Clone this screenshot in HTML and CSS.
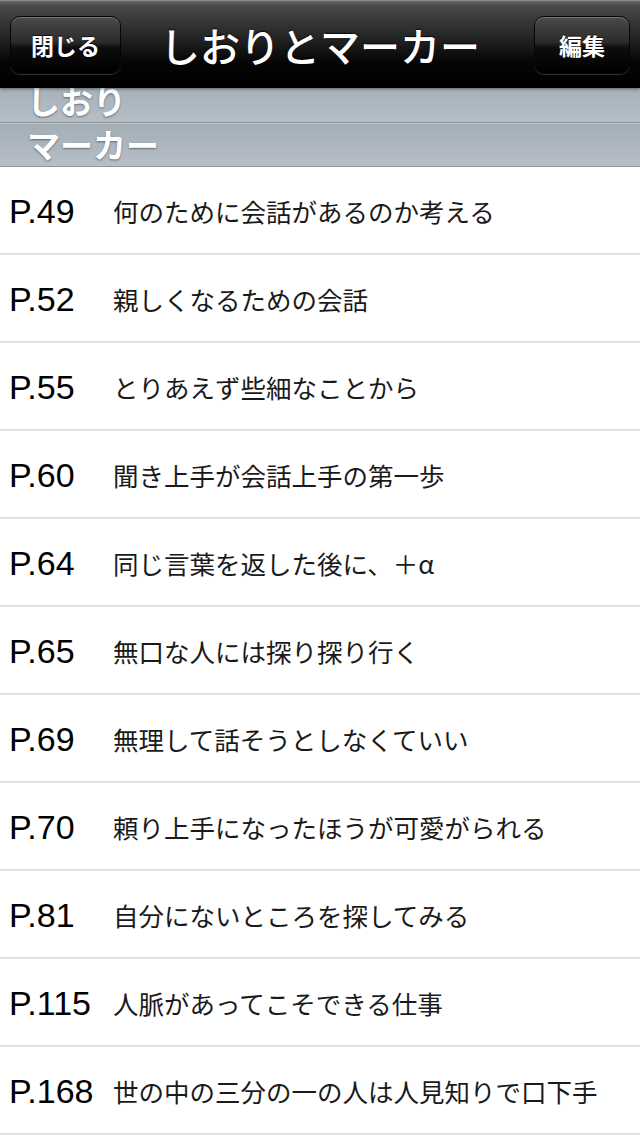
FILE: index.html
```html
<!DOCTYPE html>
<html lang="ja">
<head>
    <meta charset="UTF-8">
    <meta name="viewport" content="width=device-width, initial-scale=1.0">
    <title>しおりとマーカー</title>
    <link rel="stylesheet" href="styles.css">
</head>
<body>
    <header class="nav-bar">
        <button class="nav-button close-button" type="button">閉じる</button>
        <h1 class="nav-title">しおりとマーカー</h1>
        <button class="nav-button edit-button" type="button">編集</button>
    </header>

    <main class="list">
        <div class="section-header">しおり</div>
        <div class="section-header">マーカー</div>

        <ul class="marker-list">
            <li class="marker-row"><span class="page">P.49</span><span class="title">何のために会話があるのか考える</span></li>
            <li class="marker-row"><span class="page">P.52</span><span class="title">親しくなるための会話</span></li>
            <li class="marker-row"><span class="page">P.55</span><span class="title">とりあえず些細なことから</span></li>
            <li class="marker-row"><span class="page">P.60</span><span class="title">聞き上手が会話上手の第一歩</span></li>
            <li class="marker-row"><span class="page">P.64</span><span class="title">同じ言葉を返した後に、＋α</span></li>
            <li class="marker-row"><span class="page">P.65</span><span class="title">無口な人には探り探り行く</span></li>
            <li class="marker-row"><span class="page">P.69</span><span class="title">無理して話そうとしなくていい</span></li>
            <li class="marker-row"><span class="page">P.70</span><span class="title">頼り上手になったほうが可愛がられる</span></li>
            <li class="marker-row"><span class="page">P.81</span><span class="title">自分にないところを探してみる</span></li>
            <li class="marker-row"><span class="page">P.115</span><span class="title">人脈があってこそできる仕事</span></li>
            <li class="marker-row"><span class="page">P.168</span><span class="title">世の中の三分の一の人は人見知りで口下手</span></li>
        </ul>
    </main>
</body>
</html>
```

FILE: styles.css
```css
body {
    margin: 0;
    background-color: #fff;
    font-family: "Liberation Sans", "Noto Sans CJK JP", sans-serif;
    overflow: hidden;
}

/* navigation bar floats over the scrolled table */
.nav-bar {
    position: absolute;
    top: 0;
    left: 0;
    right: 0;
    z-index: 2;
    height: 88px;
    box-sizing: border-box;
    padding: 0 10px;
    display: grid;
    grid-template-columns: 1fr auto 1fr;
    align-items: center;
    background: linear-gradient(#6a6a6a 0, #4a4a4a 4px, #262626 40%, #050505 70%, #000 100%);
    border-top: 1px solid #8a8a8a;
    box-shadow: 0 1px 3px rgba(0, 0, 0, 0.45);
}

.nav-title {
    margin: 0;
    color: #fff;
    font-family: "Noto Sans CJK JP", sans-serif;
    font-size: 40px;
    font-weight: 500;
    line-height: 1.2;
    text-shadow: 0 -1px 1px rgba(0, 0, 0, 0.8);
}

.nav-button {
    height: 58px;
    margin-top: 1px;
    padding: 0;
    border: 1px solid #050505;
    border-radius: 10px;
    background: linear-gradient(#4a4a4a 0, #2b2b2b 45%, #0d0d0d 55%, #000 100%);
    box-shadow: inset 0 1px 0 rgba(255, 255, 255, 0.25), 0 1px 0 rgba(255, 255, 255, 0.18);
    color: #fff;
    font-family: "Noto Sans CJK JP", sans-serif;
    font-size: 23px;
    font-weight: bold;
    text-shadow: 0 -1px 0 rgba(0, 0, 0, 0.7);
}

.close-button {
    width: 111px;
    justify-self: start;
}

.edit-button {
    width: 96px;
    justify-self: end;
}

.list {
    margin-top: 79px;
}

.section-header {
    height: 44px;
    box-sizing: border-box;
    padding-left: 27px;
    background: linear-gradient(#a3aeb7, #b6bec6);
    border-top: 1px solid #bfc6cc;
    border-bottom: 1px solid #8d98a1;
    color: #fff;
    font-family: "Noto Sans CJK JP", sans-serif;
    font-size: 33px;
    font-weight: bold;
    line-height: 41px;
    text-shadow: 0 1px 2px rgba(60, 70, 80, 0.7);
}

.marker-list {
    list-style: none;
    margin: 0;
    padding: 0;
}

.marker-row {
    height: 88px;
    box-sizing: border-box;
    display: flex;
    align-items: center;
    padding-left: 9px;
    border-bottom: 2px solid #e0e0e0;
}

.page {
    flex: 0 0 91px;
    margin-right: 13px;
    margin-top: 2px;
    font-size: 34px;
    color: #000;
    white-space: nowrap;
}

.title {
    font-family: "Noto Sans CJK JP", sans-serif;
    font-size: 25.5px;
    color: #1a1a1a;
    white-space: nowrap;
}
```
